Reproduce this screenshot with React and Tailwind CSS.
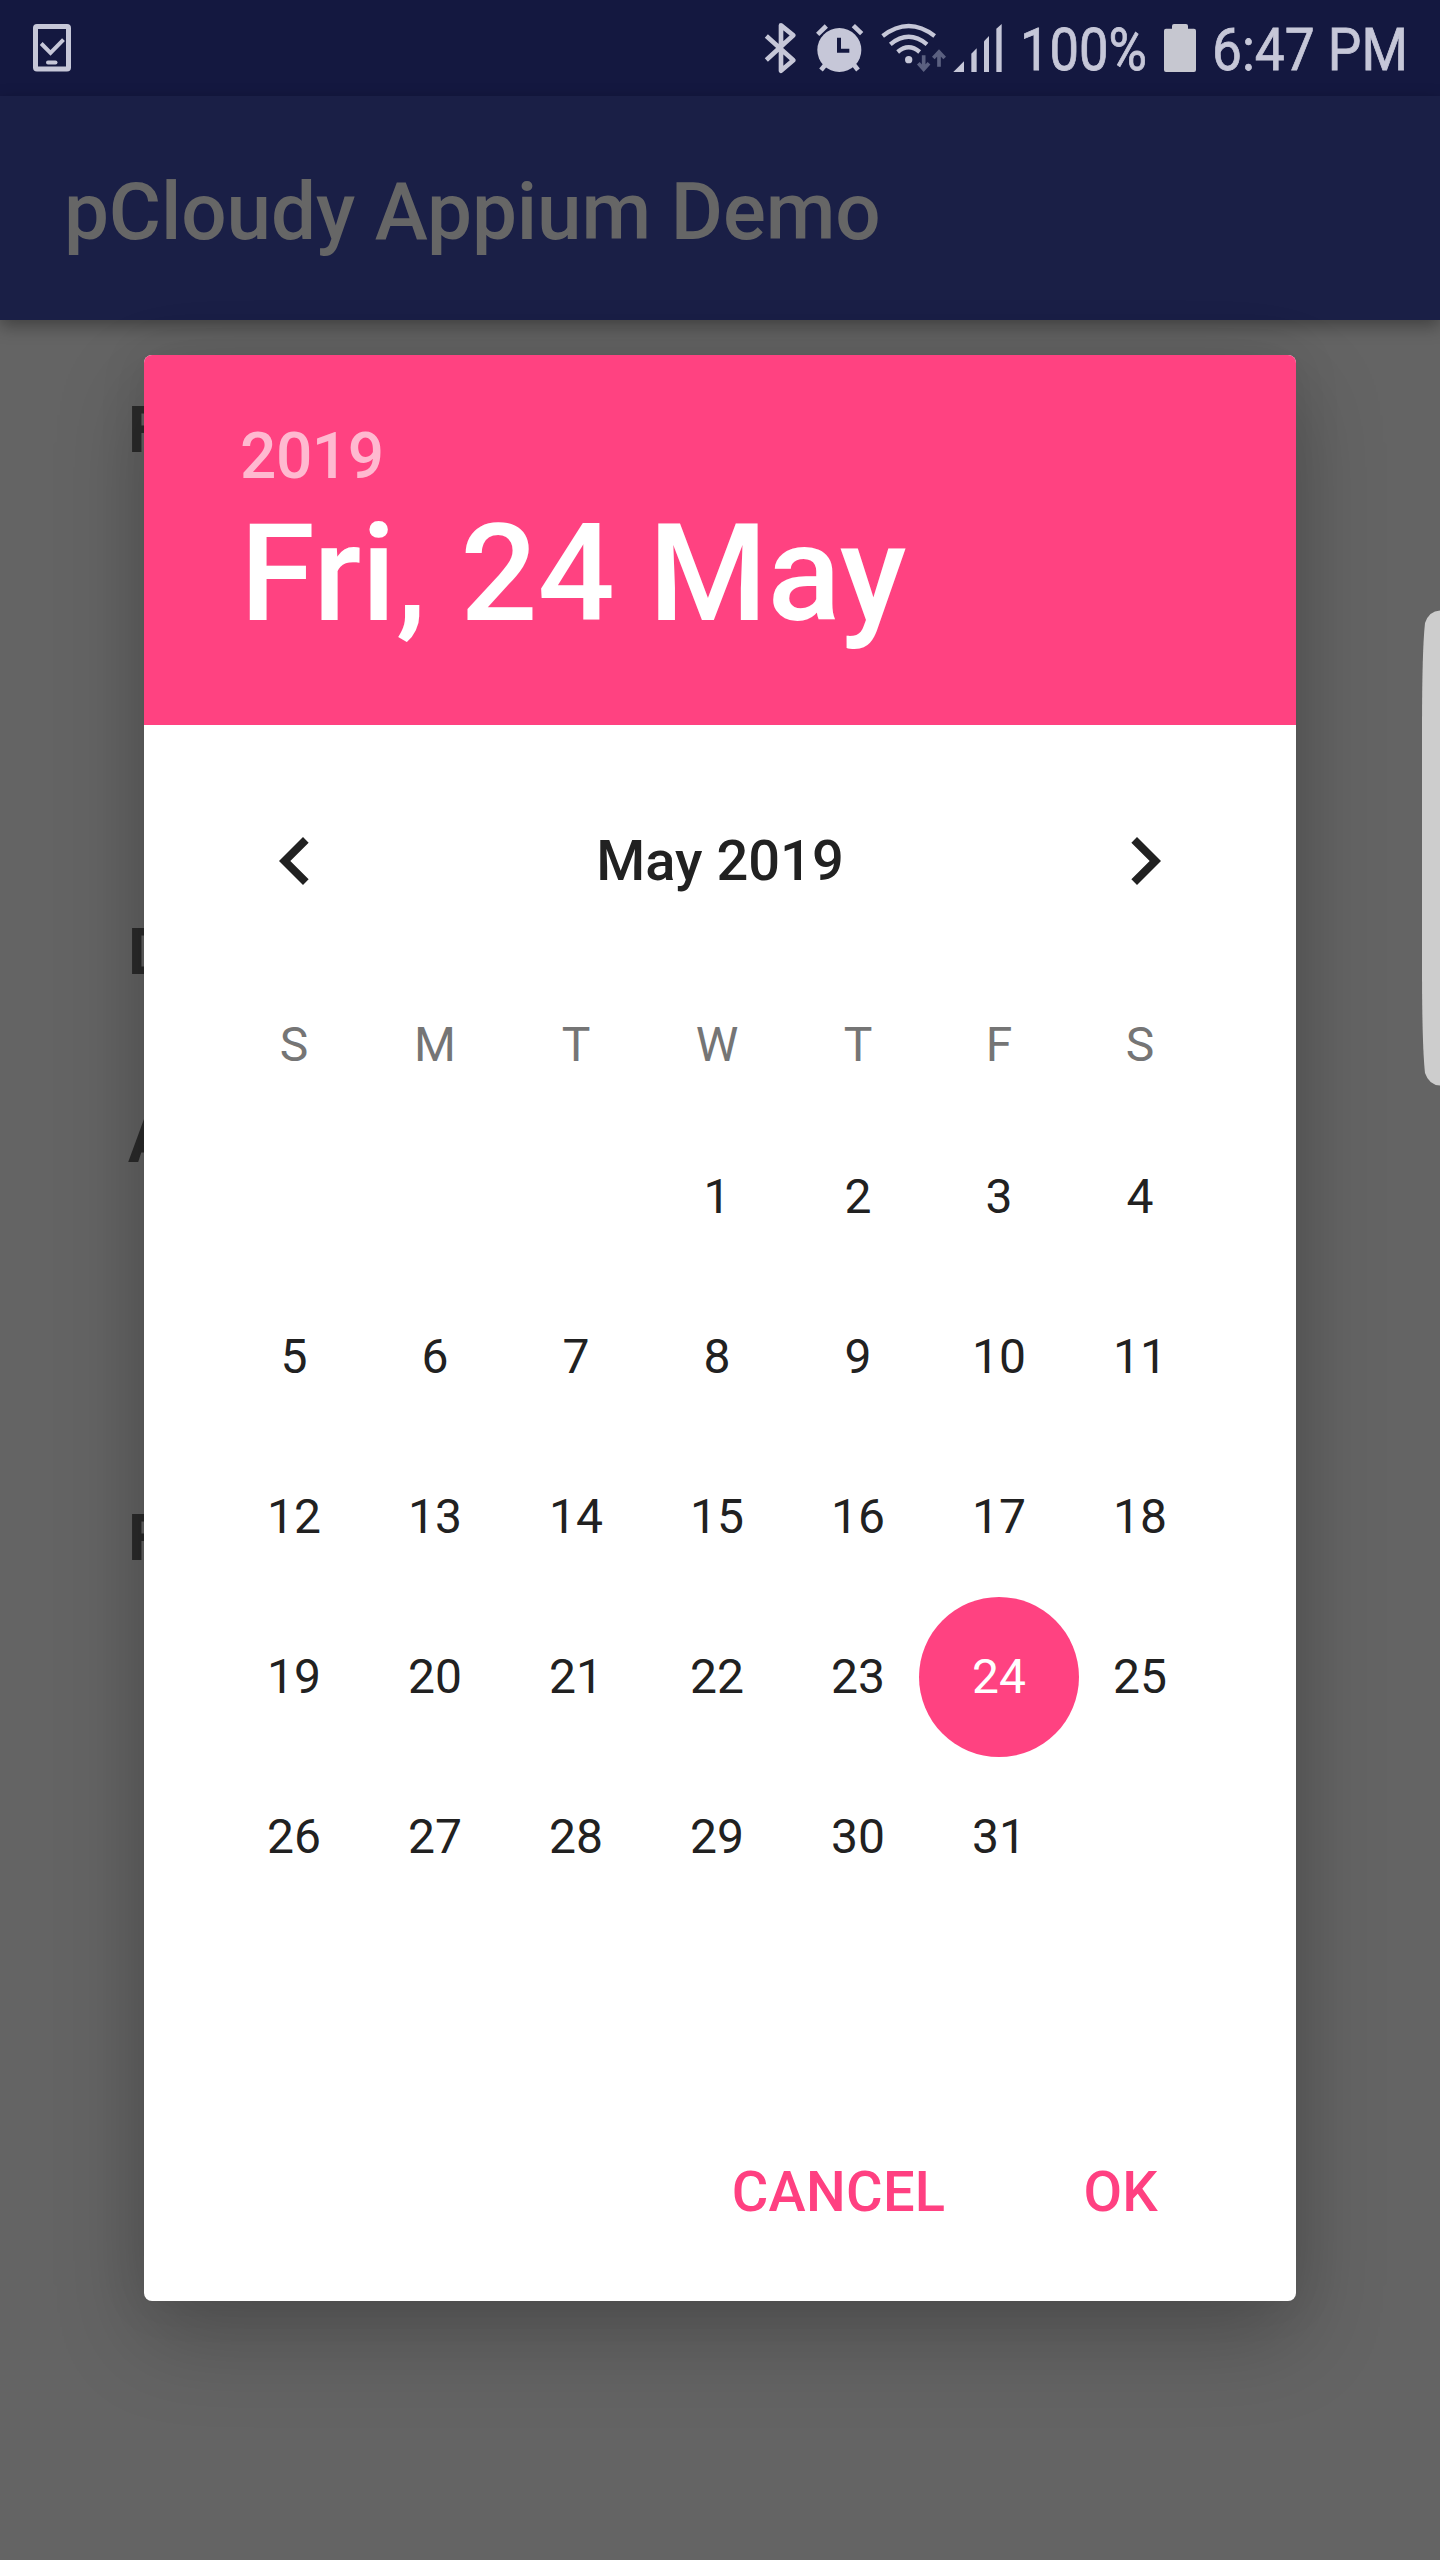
const WEEKDAYS = ["S", "M", "T", "W", "T", "F", "S"];
const LEADING_BLANKS = 3;
const SELECTED_DAY = 24;
const DAYS = Array.from({ length: 31 }, (_, i) => i + 1);

function TaskIcon() {
  return (
    <svg width="40" height="50" viewBox="0 0 40 50" fill="none" stroke="#c6c7d8">
      <rect x="3.5" y="3.5" width="33" height="42.5" rx="1.5" strokeWidth="5" />
      <path d="M9.2 20.5l9.3 9.3L31.500 16.700" strokeWidth="4" />
      <path d="M16 39.500h7.500" strokeWidth="4" strokeLinecap="round" />
    </svg>
  );
}

function BluetoothIcon() {
  return (
    <svg className="mr-[14px]" width="38" height="56" viewBox="66 60 114 168" fill="none" stroke="#c6c7d8" strokeWidth="14" strokeLinejoin="round">
      <path d="M79 108L160 181L123 212V76L160 106L79 180" />
    </svg>
  );
}

function AlarmIcon() {
  return (
    <svg className="mr-3" width="52" height="56" viewBox="222 60 156 168" fill="none" stroke="#c6c7d8">
      <circle cx="298" cy="150" r="66" fill="#c6c7d8" stroke="none" />
      <path d="M233 103L259 78M365 101L340 77" strokeWidth="14" />
      <path d="M243 210L258 192M354 210L340 192" strokeWidth="14" />
      <path d="M297 113V152H328" stroke="#141840" strokeWidth="12" />
    </svg>
  );
}

function WifiIcon() {
  return (
    <svg className="mr-1" width="70" height="56" viewBox="414 60 210 168" fill="none" stroke="#c6c7d8">
      <path d="M428 108Q506 48 584 108" strokeWidth="13" />
      <path d="M451 133Q506 88 561 133" strokeWidth="13" />
      <path d="M473 156Q506 128 539 156" strokeWidth="13" />
      <circle cx="506" cy="179" r="11" fill="#c6c7d8" stroke="none" />
      <g stroke="#5b6080" strokeWidth="11">
        <path d="M551 166V206M535 190L551 208L567 190" />
        <path d="M597 200V160M580 174L597 156L614 174" />
      </g>
    </svg>
  );
}

function SignalIcon() {
  return (
    <svg width="52" height="56" viewBox="636 60 156 168" fill="#c6c7d8">
      <path d="M640 216L672 184V216Z" />
      <path d="M694 216V161L710 145V216Z" />
      <path d="M732 216V124L747 108V216Z" />
      <path d="M769 216V86L785 72V216Z" />
    </svg>
  );
}

function BatteryIcon() {
  return (
    <svg width="34" height="56" viewBox="489 60 102 168" fill="#c6c7d0">
      <path d="M522 72H558Q564 72 564 78V86H582Q588 86 588 92V210Q588 216 582 216H498Q492 216 492 210V92Q492 86 498 86H516V78Q516 72 522 72Z" />
    </svg>
  );
}

function StatusBar() {
  return (
    <div className="flex h-24 items-center bg-[#141840] pl-8 text-[60px] leading-[96px] text-[#c6c7d8]">
      <TaskIcon />
      <div className="ml-[690px] flex items-center">
        <BluetoothIcon />
        <AlarmIcon />
        <WifiIcon />
        <SignalIcon />
        <span className="mt-[4px] ml-[16px] w-[143px] origin-left scale-x-[0.875] whitespace-nowrap [-webkit-text-stroke:0.8px]">100%</span>
        <BatteryIcon />
        <span className="mt-[4px] ml-[15px] w-[200px] origin-left scale-x-[0.887] whitespace-nowrap [-webkit-text-stroke:0.8px]">6:47 PM</span>
      </div>
    </div>
  );
}

function BackgroundPage() {
  return (
    <div className="h-[2560px] bg-[#646464]">
      <StatusBar />
      <header className="relative flex h-56 items-center bg-[#1a1f46] pt-[7px] pl-16 shadow-[0_6px_16px_rgba(0,0,0,0.35)]">
        <h1 className="text-[80px] leading-[96px] font-medium tracking-[-0.1px] text-[#666666]">pCloudy Appium Demo</h1>
      </header>
      <div className="flex flex-col pl-32 text-[64px] leading-[80px] font-bold text-[#2b2b2b]">
        <span className="mt-[71px]">F</span>
        <span className="mt-[442px]">D</span>
        <span className="mt-[108px]">A</span>
        <span className="mt-[318px]">F</span>
      </div>
    </div>
  );
}

function DayCell({ day }) {
  const selected = day === SELECTED_DAY;
  return (
    <div className="flex h-40 items-center justify-center">
      <span
        className={
          selected
            ? "flex size-40 shrink-0 items-center justify-center rounded-full bg-[#ff4281] text-white"
            : "text-[#212121]"
        }
      >
        {day}
      </span>
    </div>
  );
}

function DatePicker() {
  return (
    <div
      role="dialog"
      className="absolute top-[355px] left-36 flex h-[1946px] w-[1152px] flex-col overflow-hidden rounded-lg bg-white shadow-[0_36px_90px_rgba(0,0,0,0.22),0_0_50px_rgba(0,0,0,0.09)]"
    >
      <div className="flex h-[370px] flex-col bg-[#ff4281] pt-[64px] pl-24 font-medium">
        <span className="text-[64px] leading-[76px] tracking-[-0.5px] text-[#ffb9d0]">2019</span>
        <span className="-mt-px text-[136px] leading-[160px] text-white">Fri, 24 May</span>
      </div>

      <div className="mt-[88px] flex h-24 items-center justify-between px-[103px] text-[#212121]">
        <svg width="96" height="96" viewBox="0 0 24 24" fill="currentColor">
          <path d="M15.410 7.410L14 6l-6 6 6 6 1.410-1.410L10.830 12z" />
        </svg>
        <span className="text-[56px] leading-[66px] font-medium">May 2019</span>
        <svg width="96" height="96" viewBox="0 0 24 24" fill="currentColor">
          <path d="M10 6L8.590 7.410 13.170 12l-4.580 4.590L10 18l6-6z" />
        </svg>
      </div>

      <div className="mt-[96px] ml-[79.5px] grid w-[987px] grid-cols-7 text-center text-[48px] leading-[80px] text-[#757575]">
        {WEEKDAYS.map((d, i) => (
          <span key={i}>{d}</span>
        ))}
      </div>

      <div className="mt-8 ml-[79.5px] grid w-[987px] grid-cols-7 text-[48px] leading-[56px]">
        {Array.from({ length: LEADING_BLANKS }, (_, i) => (
          <div key={"blank" + i} />
        ))}
        {DAYS.map((d) => (
          <DayCell key={d} day={d} />
        ))}
      </div>

      <div className="mt-auto mb-[61px] flex h-24 items-center justify-end gap-[138px] pr-[138px] text-[56px] leading-[66px] font-medium tracking-[0.3px] text-[#ff4081]">
        <button>CANCEL</button>
        <button>OK</button>
      </div>
    </div>
  );
}

function EdgeHandle() {
  return (
    <svg className="absolute top-[610px] right-0" width="19" height="476" viewBox="0 0 19 476">
      <path d="M19 0.500Q8 1 4 13Q1 40 1 120V356Q1 436 4 463Q8 475 19 475.500Z" fill="#cdcdcd" />
    </svg>
  );
}

export default function App() {
  return (
    <div className="relative h-[2560px] w-[1440px] overflow-hidden font-['Roboto',sans-serif]">
      <BackgroundPage />
      <DatePicker />
      <EdgeHandle />
    </div>
  );
}
